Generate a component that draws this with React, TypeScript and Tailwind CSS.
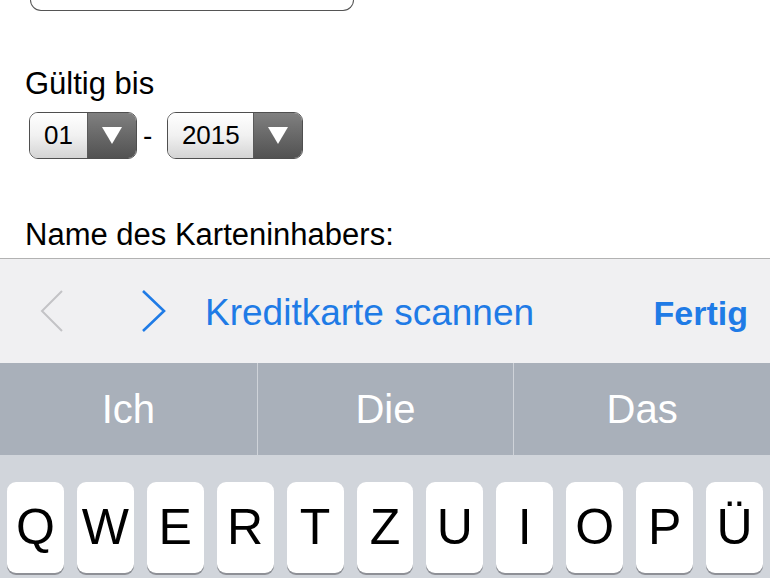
import React from "react"

const font = "font-['Liberation_Sans',Arial,Helvetica,sans-serif]"

const keys = ["Q", "W", "E", "R", "T", "Z", "U", "I", "O", "P", "Ü"]
const suggestions = ["Ich", "Die", "Das"]

const Select = ({ value, width }: { value: string; width: string }) => (
  <div className={`flex h-[47px] ${width} overflow-hidden rounded-[9px] border-[1.5px] border-[#4f4f4f]`}>
    <div className="flex flex-1 items-center justify-center bg-gradient-to-b from-[#ffffff] via-[#f1f1f1] to-[#d4d4d4] text-[26px] text-black">
      {value}
    </div>
    <div className="flex w-[49px] items-center justify-center border-l border-[#5a5a5a] bg-gradient-to-b from-[#808080] to-[#525252]">
      <svg width="22" height="19" viewBox="0 0 22 19">
        <polygon points="1,1 21,1 11,18" fill="#fff" />
      </svg>
    </div>
  </div>
)

export default function App() {
  return (
    <div className={`${font} flex h-[578px] w-[770px] flex-col overflow-hidden bg-white`}>
      {/* form area */}
      <div className="flex h-[258px] flex-col px-[25px]">
        <div className="ml-[5px] h-[11px] w-[324px] rounded-b-[11px] border-[1.5px] border-t-0 border-[#555]" />
        <div className="mt-[55px] text-[31px] leading-[36px] text-black">Gültig bis</div>
        <div className="ml-[4px] mt-[10px] flex items-center">
          <Select value="01" width="w-[108px]" />
          <span className="ml-[6px] mr-[15px] text-[28px] text-black">-</span>
          <Select value="2015" width="w-[136px]" />
        </div>
        <div className="mt-[58px] text-[31px] leading-[36px] text-black">Name des Karteninhabers:</div>
      </div>

      {/* accessory toolbar */}
      <div className="flex h-[105px] items-center border-t-[1.5px] border-[#b2b2b2] bg-[#f0f0f2] pl-[40px] pr-[22px]">
        <svg width="24" height="42" viewBox="0 0 24 42" className="shrink-0">
          <polyline points="22,1 2,21 22,41" fill="none" stroke="#c3c3c6" strokeWidth="2" />
        </svg>
        <svg width="26" height="42" viewBox="0 0 26 42" className="ml-[77px] shrink-0">
          <polyline points="2,1 23,21 2,41" fill="none" stroke="#1f7be6" strokeWidth="2.6" />
        </svg>
        <span className="ml-[38px] pt-[4px] text-[37px] text-[#1f7be6]">Kreditkarte scannen</span>
        <span className="ml-auto pt-[4px] text-[34px] font-bold text-[#1f7be6]">Fertig</span>
      </div>

      {/* suggestions */}
      <div className="grid h-[92px] grid-cols-3 bg-[#a9b0ba]">
        {suggestions.map((s, i) => (
          <div
            key={s}
            className={`flex items-center justify-center text-[40px] text-white ${i > 0 ? "border-l border-[#cfd3d9]" : ""}`}
          >
            {s}
          </div>
        ))}
      </div>

      {/* keyboard */}
      <div className="flex flex-1 gap-[13px] bg-[#d1d5db] px-[7px] pt-[27px]">
        {keys.map((k) => (
          <div
            key={k}
            className="flex h-[91px] flex-1 items-center justify-center rounded-[9px] bg-white text-[50px] text-black shadow-[0_2px_0_#8e9096]"
          >
            {k}
          </div>
        ))}
      </div>
    </div>
  )
}
